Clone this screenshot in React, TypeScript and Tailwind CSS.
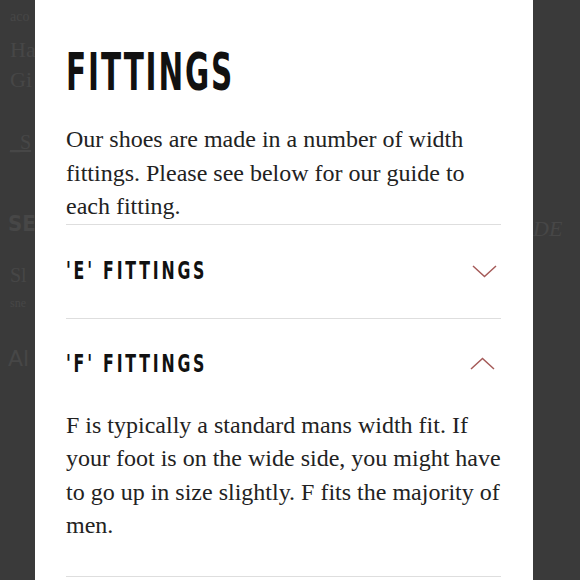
import React from "react";

const serif = { fontFamily: '"Liberation Serif", "DejaVu Serif", serif' };
const cond = { fontFamily: '"DejaVu Sans Condensed", "DejaVu Sans", sans-serif' };

function Chevron({ up }: { up?: boolean }) {
  return (
    <svg className="w-[25px] h-[13px]" viewBox="0 0 25 13" fill="none" stroke="#a55a58" strokeWidth="1.5">
      {up ? <path d="M1 12L12.5 1.5 24 12" /> : <path d="M1 1l11.5 10.5L24 1" />}
    </svg>
  );
}

export default function App() {
  return (
    <div className="w-[580px] h-[580px] bg-[#3a3a3a] flex overflow-hidden">
      {/* Dimmed page behind the modal */}
      <div className="w-[35px] shrink-0 overflow-hidden text-[#474747] whitespace-nowrap" style={serif}>
        <div className="pl-[10px] pt-[6px] text-[14px]">aco</div>
        <div className="pl-[10px] mt-[8px] text-[22px] leading-[30px]">Ha</div>
        <div className="pl-[10px] text-[22px] leading-[30px]">Gi</div>
        <div className="pl-[10px] mt-[32px] text-[20px] underline">_S</div>
        <div className="pl-[8px] mt-[50px] text-[22px] font-bold" style={cond}>SE</div>
        <div className="pl-[10px] mt-[20px] text-[20px]">Sl</div>
        <div className="pl-[10px] mt-[4px] text-[12px]">sne</div>
        <div className="pl-[8px] mt-[30px] text-[22px]" style={{ fontFamily: '"DejaVu Sans", sans-serif' }}>Al</div>
      </div>

      {/* Modal panel */}
      <div className="w-[498px] shrink-0 bg-white pl-[31px] pr-[32px] flex flex-col">
        <h1 className="pt-[46px] text-[52px] leading-[52px] font-bold text-[#111] whitespace-nowrap" style={cond}>
          <span className="inline-block origin-left scale-x-[0.63] tracking-[3px]">FITTINGS</span>
        </h1>
        <p className="mt-[25px] mr-[-8px] text-[24px] leading-[33.5px] text-[#222]" style={serif}>
          Our shoes are made in a number of width fittings. Please see below for our guide to each fitting.
        </p>
        <div className="border-t border-[#dedede]" />
        <div className="h-[93px] flex items-center justify-between">
          <span className="text-[25px] font-bold text-[#111] whitespace-nowrap" style={cond}>
            <span className="inline-block origin-left scale-x-[0.7] tracking-[4px]">'E' FITTINGS</span>
          </span>
          <div className="mr-[4px]">
            <Chevron />
          </div>
        </div>
        <div className="border-t border-[#dedede]" />
        <div className="h-[90px] flex items-center justify-between">
          <span className="text-[25px] font-bold text-[#111] whitespace-nowrap" style={cond}>
            <span className="inline-block origin-left scale-x-[0.7] tracking-[4px]">'F' FITTINGS</span>
          </span>
          <div className="mr-[6px]">
            <Chevron up />
          </div>
        </div>
        <p className="mr-[-8px] text-[24px] leading-[33.5px] text-[#222]" style={serif}>
          F is typically a standard mans width fit. If your foot is on the wide side, you might have to go up in size slightly. F fits the majority of men.
        </p>
        <div className="mt-[33px] border-t border-[#dedede]" />
      </div>

      <div className="flex-1 overflow-hidden text-[#474747] whitespace-nowrap" style={serif}>
        <div className="mt-[212px] text-[22px] italic">DE</div>
      </div>
    </div>
  );
}
